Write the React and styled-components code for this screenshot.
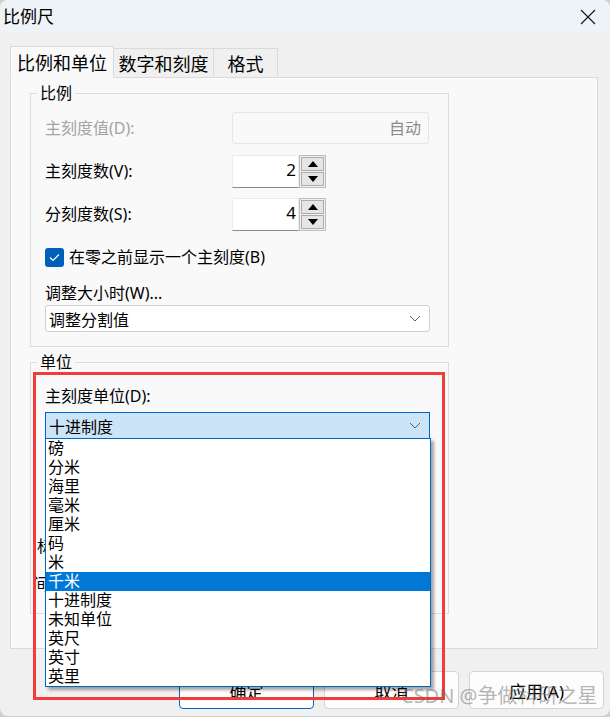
import styled, { createGlobalStyle } from 'styled-components';

const GlobalStyle = createGlobalStyle`
  html, body {
    margin: 0;
    padding: 0;
    background: #cfcfcf;
    overflow: hidden;
  }
  * {
    box-sizing: border-box;
  }
`;

const FONT = `"Noto Sans", "Noto Sans CJK SC", sans-serif`;

const Window = styled.div`
  position: relative;
  width: 610px;
  height: 716px;
  background: #f0f0f0;
  border-radius: 8px;
  overflow: hidden;
  font-family: ${FONT};
  color: #000;
`;

const TitleBar = styled.div`
  height: 33px;
  background: #eef3f8;
  display: flex;
  align-items: center;
  justify-content: space-between;
  padding: 0 14px 0 3px;
`;

const Title = styled.span`
  font-size: 17px;
  line-height: 20px;
`;

const Body = styled.div`
  padding: 13px 0 0 10px;
`;

const TabRow = styled.div`
  display: flex;
  align-items: flex-end;
  height: 31px;
`;

const Tab = styled.div`
  position: relative;
  z-index: ${(p) => (p.$active ? 2 : 1)};
  width: ${(p) => p.$w}px;
  height: ${(p) => (p.$active ? '32px' : '29px')};
  margin-bottom: ${(p) => (p.$active ? '-1px' : '0')};
  display: flex;
  align-items: center;
  justify-content: center;
  font-size: 18px;
  white-space: nowrap;
  background: ${(p) => (p.$active ? '#f9f9f9' : '#f0f0f0')};
  border: 1px solid #dadada;
  border-bottom-color: ${(p) => (p.$active ? '#f9f9f9' : 'transparent')};
  border-left-width: ${(p) => (p.$first ? '1px' : '0')};
  padding-top: ${(p) => (p.$active ? '0' : '1px')};
`;

const Panel = styled.div`
  width: 588px;
  height: 572px;
  background: #f9f9f9;
  border: 1px solid #dadada;
  padding: 4px 0 0 19px;
`;

const Group = styled.fieldset`
  margin: ${(p) => p.$top || 0}px 0 0 0;
  width: 419px;
  height: ${(p) => p.$h}px;
  border: 1px solid #dcdcdc;
  padding: ${(p) => p.$pt}px 0 0 14px;
  min-width: 0;
`;

const Legend = styled.legend`
  margin-left: -8px;
  padding: 0 3px;
  font-size: 16px;
  line-height: 22px;
`;

const FieldRow = styled.div`
  display: flex;
  align-items: center;
  height: 32px;
  margin-top: ${(p) => p.$mt || 0}px;
`;

const Label = styled.div`
  width: 187px;
  font-size: 16px;
  line-height: 22px;
  color: ${(p) => (p.$disabled ? '#a3a3a3' : '#000')};
  margin-top: ${(p) => p.$mt || 0}px;
  margin-left: ${(p) => p.$ml || 0}px;
`;

const DisabledInput = styled.div`
  width: 197px;
  height: 32px;
  border: 1px solid #e6e6e6;
  border-radius: 3px;
  background: #f9f9f9;
  color: #8a8a8a;
  font-size: 16px;
  display: flex;
  align-items: center;
  justify-content: flex-end;
  padding: 0 7px 3px 0;
`;

const Spin = styled.div`
  display: flex;
  height: 33px;
`;

const SpinField = styled.div`
  width: 67px;
  height: 33px;
  background: #fff;
  border: 1px solid #ececec;
  border-bottom: 1px solid #8a8a8a;
  font-size: 17px;
  display: flex;
  align-items: center;
  justify-content: flex-end;
  padding: 0 2px 4px 0;
`;

const SpinButtons = styled.div`
  width: 27px;
  border: 1px solid #bdbdbd;
  background: #f0f0f0;
  display: flex;
  flex-direction: column;
  gap: 1px;
  padding: 1px;
`;

const SpinButton = styled.div`
  flex: 1;
  background: #e5e5e5;
  border: 1px solid #adadad;
  display: flex;
  align-items: center;
  justify-content: center;
`;

const CheckRow = styled.label`
  display: flex;
  align-items: center;
  gap: 5px;
  margin-top: 17px;
  font-size: 16px;
  line-height: 20px;
`;

const CheckBox = styled.span`
  width: 19px;
  height: 19px;
  border-radius: 3px;
  background: #005fb8;
  display: flex;
  align-items: center;
  justify-content: center;
`;

const SelectWrap = styled.div`
  position: relative;
  width: 385px;
  margin-top: ${(p) => p.$mt || 0}px;
`;

const SelectBox = styled.div`
  height: 27px;
  background: ${(p) => (p.$open ? '#cce4f7' : '#fff')};
  border: 1px solid ${(p) => (p.$open ? '#0067c0' : '#cfcfcf')};
  border-radius: ${(p) => (p.$open ? '0' : '3px')};
  font-size: 16px;
  display: flex;
  align-items: center;
  justify-content: space-between;
  padding: 0 8px 0 3px;
`;

const DropList = styled.div`
  position: absolute;
  z-index: 5;
  top: 26px;
  left: 0;
  width: 386px;
  background: #fff;
  border: 1px solid #0067c0;
  box-shadow: 3px 3px 3px rgba(0, 0, 0, 0.35);
`;

const DropItem = styled.div`
  height: 19px;
  line-height: 19px;
  font-size: 16px;
  padding-left: 2px;
  background: ${(p) => (p.$selected ? '#0078d7' : '#fff')};
  color: ${(p) => (p.$selected ? '#fff' : '#000')};
`;

const ButtonRow = styled.div`
  display: flex;
  justify-content: flex-end;
  gap: 10px;
  margin-top: 22px;
  padding-right: 6px;
`;

const DialogButton = styled.div`
  width: 135px;
  height: 38px;
  border-radius: 4px;
  background: #fdfdfd;
  border: 1px solid ${(p) => (p.$primary ? '#0067c0' : '#d3d3d3')};
  font-size: 17px;
  display: flex;
  align-items: center;
  justify-content: center;
`;

const Annotation = styled.div`
  position: absolute;
  z-index: 10;
  left: 33px;
  top: 372px;
  width: 412px;
  height: 328px;
  border: 3px solid #f23c3c;
  pointer-events: none;
`;

const Watermark = styled.div`
  position: absolute;
  z-index: 11;
  left: 401px;
  top: 682px;
  font-size: 20px;
  line-height: 28px;
  color: rgba(110, 110, 110, 0.5);
  white-space: nowrap;
`;

const Chevron = () => (
  <svg width="12" height="7" viewBox="0 0 12 7">
    <path d="M1 1 L6 6 L11 1" fill="none" stroke="#5f5f5f" strokeWidth="1" />
  </svg>
);

const Arrow = ({ up }) => (
  <svg width="10" height="6" viewBox="0 0 10 6">
    <path d={up ? 'M0 6 L5 0 L10 6 Z' : 'M0 0 L10 0 L5 6 Z'} fill="#000" />
  </svg>
);

const units = ['磅', '分米', '海里', '毫米', '厘米', '码', '米', '千米', '十进制度', '未知单位', '英尺', '英寸', '英里'];

const SpinInput = ({ value }) => (
  <Spin>
    <SpinField>{value}</SpinField>
    <SpinButtons>
      <SpinButton><Arrow up /></SpinButton>
      <SpinButton><Arrow /></SpinButton>
    </SpinButtons>
  </Spin>
);

export default function App() {
  return (
    <Window>
      <GlobalStyle />
      <TitleBar>
        <Title>比例尺</Title>
        <svg width="16" height="16" viewBox="0 0 16 16">
          <path d="M1 1 L15 15 M15 1 L1 15" stroke="#1a1a1a" strokeWidth="1.2" />
        </svg>
      </TitleBar>
      <Body>
        <TabRow>
          <Tab $active $first $w={104}>比例和单位</Tab>
          <Tab $w={100}>数字和刻度</Tab>
          <Tab $w={64}>格式</Tab>
        </TabRow>
        <Panel>
          <Group $h={265} $pt={8}>
            <Legend>比例</Legend>
            <FieldRow>
              <Label $disabled>主刻度值(D):</Label>
              <DisabledInput>自动</DisabledInput>
            </FieldRow>
            <FieldRow $mt={11}>
              <Label>主刻度数(V):</Label>
              <SpinInput value="2" />
            </FieldRow>
            <FieldRow $mt={11}>
              <Label>分刻度数(S):</Label>
              <SpinInput value="4" />
            </FieldRow>
            <CheckRow>
              <CheckBox>
                <svg width="11" height="9" viewBox="0 0 11 9">
                  <path d="M1 4.5 L4 7.5 L10 1.5" fill="none" stroke="#fff" strokeWidth="1.2" />
                </svg>
              </CheckBox>
              在零之前显示一个主刻度(B)
            </CheckRow>
            <Label $mt={15}>调整大小时(W)...</Label>
            <SelectWrap $mt={1}>
              <SelectBox>
                调整分割值
                <Chevron />
              </SelectBox>
            </SelectWrap>
          </Group>
          <Group $top={4} $h={263} $pt={12}>
            <Legend>单位</Legend>
            <Label>主刻度单位(D):</Label>
            <SelectWrap $mt={5}>
              <SelectBox $open>
                十进制度
                <Chevron />
              </SelectBox>
              <DropList>
                {units.map((u) => (
                  <DropItem key={u} $selected={u === '千米'}>{u}</DropItem>
                ))}
              </DropList>
            </SelectWrap>
            <Label $mt={96} $ml={-8}>标注单位(L):</Label>
            <Label $mt={16} $ml={-12}>间距单位(G):</Label>
          </Group>
        </Panel>
        <ButtonRow>
          <DialogButton $primary>确定</DialogButton>
          <DialogButton>取消</DialogButton>
          <DialogButton>应用(A)</DialogButton>
        </ButtonRow>
      </Body>
      <Annotation />
      <Watermark>CSDN @争做科研之星</Watermark>
    </Window>
  );
}
